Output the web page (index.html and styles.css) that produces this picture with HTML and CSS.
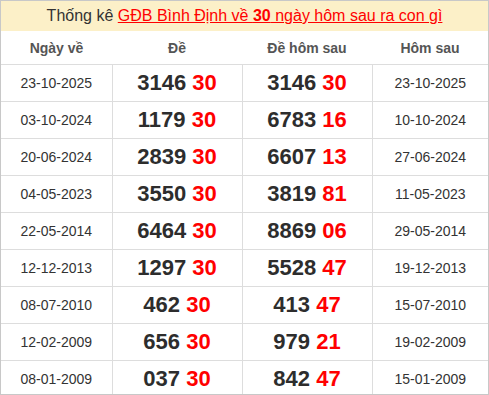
FILE: index.html
```html
<!DOCTYPE html>
<html lang="vi">
<head>
    <meta charset="UTF-8">
    <title>Thống kê GĐB Bình Định về 30 ngày hôm sau</title>
    <link rel="stylesheet" href="styles.css">
</head>
<body>
    <div class="box">
        <div class="title">
            Thống kê <a href="#">GĐB Bình Định về <b>30</b> ngày hôm sau ra con gì</a>
        </div>
        <table class="stats">
            <thead>
                <tr>
                    <th class="c1">Ngày về</th>
                    <th class="c2">Đề</th>
                    <th class="c3">Đề hôm sau</th>
                    <th class="c4">Hôm sau</th>
                </tr>
            </thead>
            <tbody>
                <tr><td>23-10-2025</td><td class="num">3146 <span>30</span></td><td class="num">3146 <span>30</span></td><td>23-10-2025</td></tr>
                <tr><td>03-10-2024</td><td class="num">1179 <span>30</span></td><td class="num">6783 <span>16</span></td><td>10-10-2024</td></tr>
                <tr><td>20-06-2024</td><td class="num">2839 <span>30</span></td><td class="num">6607 <span>13</span></td><td>27-06-2024</td></tr>
                <tr><td>04-05-2023</td><td class="num">3550 <span>30</span></td><td class="num">3819 <span>81</span></td><td>11-05-2023</td></tr>
                <tr><td>22-05-2014</td><td class="num">6464 <span>30</span></td><td class="num">8869 <span>06</span></td><td>29-05-2014</td></tr>
                <tr><td>12-12-2013</td><td class="num">1297 <span>30</span></td><td class="num">5528 <span>47</span></td><td>19-12-2013</td></tr>
                <tr><td>08-07-2010</td><td class="num">462 <span>30</span></td><td class="num">413 <span>47</span></td><td>15-07-2010</td></tr>
                <tr><td>12-02-2009</td><td class="num">656 <span>30</span></td><td class="num">979 <span>21</span></td><td>19-02-2009</td></tr>
                <tr><td>08-01-2009</td><td class="num">037 <span>30</span></td><td class="num">842 <span>47</span></td><td>15-01-2009</td></tr>
            </tbody>
        </table>
    </div>
</body>
</html>
```

FILE: styles.css
```css
body {
    margin: 0;
    padding: 0;
    font-family: 'Liberation Sans', Arial, sans-serif;
    color: #333;
    background-color: #fff;
}

.box {
    width: 489px;
    height: 395px;
    box-sizing: border-box;
    border: 1px solid #c8c8c8;
    overflow: hidden;
}

.title {
    height: 30px;
    line-height: 30px;
    background-color: #fcf0c8;
    text-align: center;
    font-size: 16px;
    color: #333;
}

.title a {
    color: #f00;
    text-decoration: underline;
}

.stats {
    width: 100%;
    border-collapse: collapse;
    table-layout: fixed;
}

.stats th {
    height: 33px;
    padding: 0;
    font-size: 14px;
    font-weight: bold;
    color: #555;
    border-bottom: 1px solid #ddd;
}

.stats td {
    height: 36px;
    padding: 0;
    text-align: center;
    font-size: 14px;
    color: #333;
    border: 1px solid #ddd;
}

.stats tr td:first-child {
    border-left: none;
}

.stats tr td:last-child {
    border-right: none;
}

.c1 { width: 111px; }
.c2 { width: 130px; }
.c3 { width: 130px; }

.stats td.num {
    font-size: 22px;
    font-weight: bold;
    color: #2d2d2d;
}

.stats td.num span {
    color: #f00;
}
```
